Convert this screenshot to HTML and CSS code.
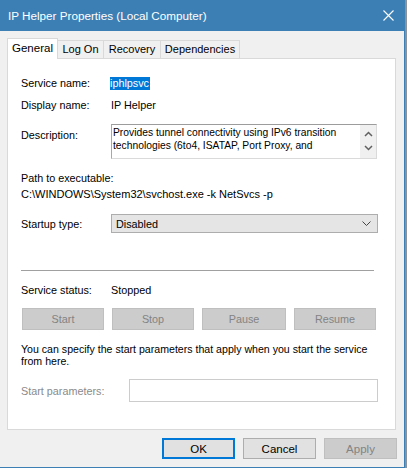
FILE: index.html
```html
<!DOCTYPE html>
<html>
<head>
<meta charset="utf-8">
<link rel="stylesheet" href="styles.css">
</head>
<body>
<div class="window">
  <div class="titlebar">
    <span class="title">IP Helper Properties (Local Computer)</span>
    <svg class="close" width="11" height="11" viewBox="0 0 11 11"><path d="M0.5 0.5L10.5 10.5M10.5 0.5L0.5 10.5" stroke="#fff" stroke-width="1.1" fill="none"/></svg>
  </div>
  <div class="tabs">
    <div class="tab active t-general">General</div>
    <div class="tab t-logon">Log On</div>
    <div class="tab t-recovery">Recovery</div>
    <div class="tab t-deps">Dependencies</div>
  </div>
  <div class="panel">
    <div class="row r-service">
      <span class="label">Service name:</span>
      <span class="value"><span class="selected">iphlpsvc</span></span>
    </div>
    <div class="row r-display">
      <span class="label">Display name:</span>
      <span class="value">IP Helper</span>
    </div>
    <div class="row r-desc">
      <span class="label desc-label">Description:</span>
      <div class="descbox">
        <div class="desctext">Provides tunnel connectivity using IPv6 transition technologies (6to4, ISATAP, Port Proxy, and</div>
        <div class="scroll">
          <svg width="9" height="6" viewBox="0 0 9 6"><path d="M1 5L4.5 1.5L8 5" stroke="#606060" stroke-width="1.5" fill="none"/></svg>
          <svg width="9" height="6" viewBox="0 0 9 6"><path d="M1 1L4.5 4.5L8 1" stroke="#606060" stroke-width="1.5" fill="none"/></svg>
        </div>
      </div>
    </div>
    <div class="pathlabel">Path to executable:</div>
    <div class="pathvalue">C:\WINDOWS\System32\svchost.exe -k NetSvcs -p</div>
    <div class="row r-startup">
      <span class="label">Startup type:</span>
      <div class="combo">
        <span>Disabled</span>
        <svg width="9" height="5" viewBox="0 0 9 5"><path d="M0.5 0.5L4.5 4.5L8.5 0.5" stroke="#444" stroke-width="1" fill="none"/></svg>
      </div>
    </div>
    <div class="separator"></div>
    <div class="row r-status">
      <span class="label">Service status:</span>
      <span class="value">Stopped</span>
    </div>
    <div class="svcbuttons">
      <div class="btn disabled">Start</div>
      <div class="btn disabled">Stop</div>
      <div class="btn disabled">Pause</div>
      <div class="btn disabled">Resume</div>
    </div>
    <p class="hint">You can specify the start parameters that apply when you start the service from here.</p>
    <div class="row r-params">
      <span class="label params-label">Start parameters:</span>
      <div class="paraminput"></div>
    </div>
  </div>
  <div class="footer">
    <div class="btn ok">OK</div>
    <div class="btn normal">Cancel</div>
    <div class="btn disabled">Apply</div>
  </div>
</div>
</body>
</html>
```
FILE: styles.css
```css
* { box-sizing: border-box; }
html, body { margin: 0; padding: 0; }
body {
  width: 407px;
  height: 468px;
  background: #8a929c;
  font-family: "Liberation Sans", Arial, sans-serif;
  font-size: 10.8px;
  color: #000;
  overflow: hidden;
}
.window {
  width: 405px;
  height: 468px;
  background: #f0f0f0;
  border-right: 1px solid #3c7fb5;
  border-bottom: 1px solid #3c7fb5;
  display: flex;
  flex-direction: column;
}
.titlebar {
  height: 31px;
  background: #3c7fb5;
  display: flex;
  align-items: center;
  justify-content: space-between;
  padding: 0 10px 0 8px;
}
.title {
  color: #fff;
  font-size: 11.7px;
}
.close { margin-top: -1px; }
.tabs {
  display: flex;
  align-items: flex-end;
  margin-top: 7px;
  margin-left: 7px;
  height: 20px;
  position: relative;
  z-index: 1;
}
.tab {
  height: 18px;
  border: 1px solid #d9d9d9;
  border-bottom: none;
  background: #f0f0f0;
  line-height: 17px;
  text-align: center;
  margin-left: -1px;
  font-size: 11px;
}
.tab.active {
  height: 21px;
  margin-bottom: -1px;
  background: #fff;
  margin-left: 0;
  line-height: 18px;
  font-size: 11.5px;
}
.t-general { width: 51px; }
.t-logon { width: 46px; border-left: none; margin-left: 0; }
.t-recovery { width: 58px; }
.t-deps { width: 80px; }
.panel {
  margin-left: 7px;
  width: 389px;
  height: 372px;
  background: #fff;
  border: 1px solid #d9d9d9;
  padding: 0 0 0 13px;
}
.row {
  display: flex;
  align-items: center;
}
.label {
  width: 90px;
  flex: none;
}
.r-service { margin-top: 17px; height: 14px; }
.selected {
  background: #0078d7;
  color: #fff;
  padding: 0 1px 1px 0;
  display: inline-block;
  line-height: 12px;
  margin-left: -1px;
}
.r-display { margin-top: 8px; height: 14px; }
.r-desc { margin-top: 12px; align-items: flex-start; }
.desc-label { padding-top: 5px; }
.descbox {
  width: 266px;
  height: 35px;
  border: 1px solid #dadada;
  border-top-color: #9c9c9c;
  border-left-color: #a8a8a8;
  display: flex;
}
.desctext {
  flex: 1;
  padding: 1px 0 0 1px;
  line-height: 13px;
  overflow: hidden;
  height: 33px;
  font-size: 10.3px;
}
.scroll {
  width: 16px;
  background: #f0f0f0;
  display: flex;
  flex-direction: column;
  align-items: center;
  justify-content: center;
  gap: 8px;
  padding-bottom: 1px;
}
.pathlabel { margin-top: 12px; line-height: 14px; }
.pathvalue { margin-top: 2px; line-height: 14px; font-size: 11px; }
.r-startup { margin-top: 13px; }
.combo {
  width: 267px;
  height: 19px;
  background: #e5e5e5;
  border: 1px solid #adadad;
  display: flex;
  align-items: center;
  justify-content: space-between;
  padding: 0 6px 0 4px;
}
.separator {
  margin-top: 37px;
  width: 353px;
  height: 1px;
  background: #a0a0a0;
}
.r-status { margin-top: 12px; height: 14px; }
.svcbuttons {
  display: flex;
  gap: 8px;
  margin-top: 11px;
  margin-left: 1px;
}
.btn {
  height: 22px;
  border: 1px solid #adadad;
  background: #e1e1e1;
  display: flex;
  align-items: center;
  justify-content: center;
}
.btn.disabled {
  background: #cccccc;
  border-color: #bfbfbf;
  color: #838383;
}
.svcbuttons .btn { width: 82px; }
.svcbuttons .btn:nth-child(3) { width: 84px; }
.hint {
  margin: 13px 0 0 0;
  width: 360px;
  line-height: 12px;
  font-size: 10.6px;
}
.r-params { margin-top: 12px; }
.params-label { width: 108px; color: #8a8a8a; }
.paraminput {
  width: 249px;
  height: 23px;
  border: 1px solid #cccccc;
  background: #fff;
}
.footer {
  display: flex;
  justify-content: flex-end;
  gap: 8px;
  padding: 8px 7px 0 0;
}
.footer .btn { width: 73px; height: 21px; font-size: 11.5px; }
.btn.ok {
  border: 2px solid #0078d7;
}
```
